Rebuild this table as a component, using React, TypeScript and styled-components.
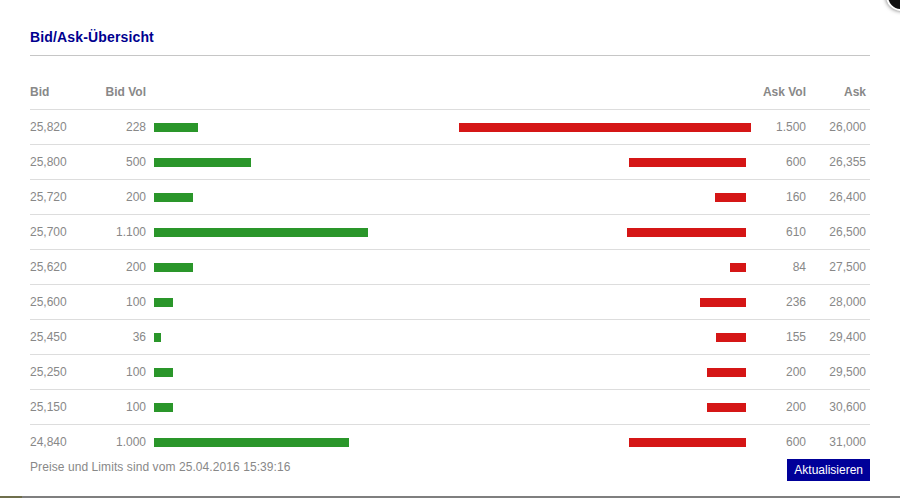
import styled, { createGlobalStyle } from "styled-components";

// Pixels per traded unit for the volume bars
const barScale = 0.1945;

const GlobalStyle = createGlobalStyle`
  html, body {
    margin: 0;
    padding: 0;
    background: #ffffff;
  }

  body {
    font-family: "Liberation Sans", Arial, sans-serif;
    font-size: 12px;
    color: #888888;
  }
`;

type Quote = {
  bid: string;
  bidVol: number;
  askVol: number;
  ask: string;
};

const quotes: Quote[] = [
  { bid: "25,820", bidVol: 228, askVol: 1500, ask: "26,000" },
  { bid: "25,800", bidVol: 500, askVol: 600, ask: "26,355" },
  { bid: "25,720", bidVol: 200, askVol: 160, ask: "26,400" },
  { bid: "25,700", bidVol: 1100, askVol: 610, ask: "26,500" },
  { bid: "25,620", bidVol: 200, askVol: 84, ask: "27,500" },
  { bid: "25,600", bidVol: 100, askVol: 236, ask: "28,000" },
  { bid: "25,450", bidVol: 36, askVol: 155, ask: "29,400" },
  { bid: "25,250", bidVol: 100, askVol: 200, ask: "29,500" },
  { bid: "25,150", bidVol: 100, askVol: 200, ask: "30,600" },
  { bid: "24,840", bidVol: 1000, askVol: 600, ask: "31,000" },
];

// German thousands separator
const formatVol = (v: number) => v.toLocaleString("de-DE");

const Page = styled.div`
  position: relative;
  height: 498px;
  overflow: hidden;
  display: flex;
  flex-direction: column;
`;

const Panel = styled.div`
  padding: 29px 30px 0;
  display: flex;
  flex-direction: column;
`;

const Title = styled.h2`
  margin: 0;
  padding-bottom: 10px;
  border-bottom: 1px solid #c6c6c6;
  font-size: 14px;
  line-height: 16px;
  font-weight: bold;
  letter-spacing: 0.15px;
  color: #00008f;
`;

const Row = styled.div<{ $head?: boolean; $last?: boolean }>`
  display: grid;
  grid-template-columns: 70px 46px 1fr 60px 60px;
  align-items: center;
  height: 34px;
  margin-top: ${(p) => (p.$head ? 19 : 0)}px;
  padding-right: 4px;
  border-bottom: ${(p) => (p.$last ? "none" : "1px solid #dddddd")};
  font-weight: ${(p) => (p.$head ? "bold" : "normal")};
  line-height: 14px;
`;

const Cell = styled.div<{ $right?: boolean }>`
  text-align: ${(p) => (p.$right ? "right" : "left")};
  white-space: nowrap;
`;

const Bars = styled.div`
  display: flex;
  justify-content: space-between;
  align-items: center;
  padding-left: 8px;
`;

const Bar = styled.div<{ $side: "bid" | "ask"; $shift?: number }>`
  height: 9px;
  background: ${(p) => (p.$side === "bid" ? "#2a962a" : "#d51616")};
  margin-right: ${(p) => -(p.$shift ?? 0)}px;
`;

const Footer = styled.div`
  display: flex;
  justify-content: space-between;
  align-items: flex-start;
  line-height: 14px;
`;

const FooterNote = styled.span`
  padding-top: 1px;
  letter-spacing: 0.08px;
`;

const RefreshButton = styled.button`
  height: 22px;
  padding: 0 7px;
  border: none;
  background: #000099;
  color: #ffffff;
  font-family: "Liberation Sans", Arial, sans-serif;
  font-size: 12px;
  cursor: pointer;
`;

const BottomStrip = styled.div`
  margin-top: auto;
  display: flex;
  height: 2px;
  background: #7f7f7f;
`;

const StripAccent = styled.div`
  width: 22px;
  background: #6f6f4c;
`;

const CloseButton = styled.div`
  position: absolute;
  top: -19px;
  left: 886px;
  width: 26px;
  height: 26px;
  border-radius: 50%;
  background: #111111;
  border: 2px solid #ffffff;
  box-shadow: 0 0 4px rgba(0, 0, 0, 0.6);
`;

export default function App() {
  return (
    <>
      <GlobalStyle />
      <Page>
        <Panel>
          <Title>Bid/Ask-Übersicht</Title>
          <Row $head>
            <Cell>Bid</Cell>
            <Cell $right>Bid Vol</Cell>
            <div />
            <Cell $right>Ask Vol</Cell>
            <Cell $right>Ask</Cell>
          </Row>
          {quotes.map((q, i) => (
            <Row key={q.bid} $last={i === quotes.length - 1}>
              <Cell>{q.bid}</Cell>
              <Cell $right>{formatVol(q.bidVol)}</Cell>
              <Bars>
                <Bar
                  $side="bid"
                  style={{ width: Math.round(q.bidVol * barScale) }}
                />
                <Bar
                  $side="ask"
                  $shift={i === 0 ? 5 : 0}
                  style={{ width: Math.round(q.askVol * barScale) }}
                />
              </Bars>
              <Cell $right>{formatVol(q.askVol)}</Cell>
              <Cell $right>{q.ask}</Cell>
            </Row>
          ))}
          <Footer>
            <FooterNote>Preise und Limits sind vom 25.04.2016 15:39:16</FooterNote>
            <RefreshButton>Aktualisieren</RefreshButton>
          </Footer>
        </Panel>
        <BottomStrip>
          <StripAccent />
        </BottomStrip>
        <CloseButton />
      </Page>
    </>
  );
}
